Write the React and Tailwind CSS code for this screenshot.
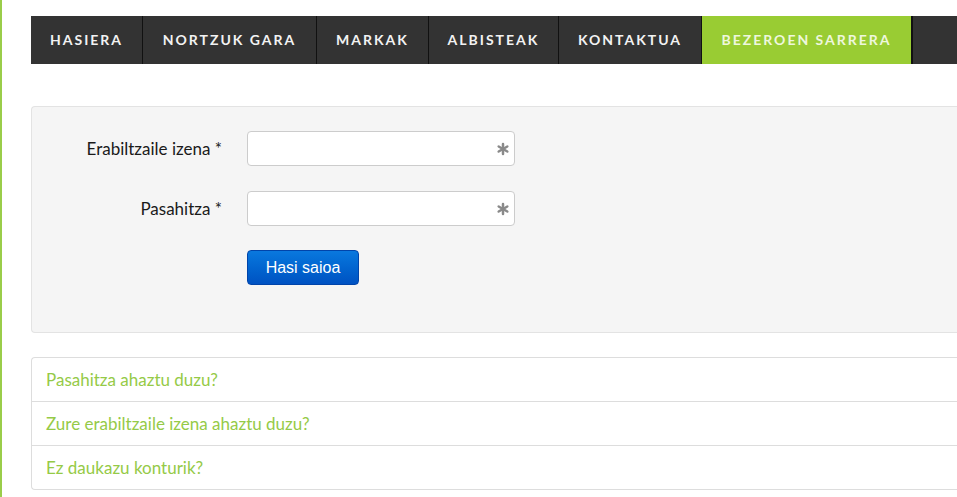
import { Asterisk } from "lucide-react";

const navItems = [
  { label: "HASIERA", w: "w-[112px]" },
  { label: "NORTZUK GARA", w: "w-[174px]" },
  { label: "MARKAK", w: "w-[112px]" },
  { label: "ALBISTEAK", w: "w-[130px]" },
  { label: "KONTAKTUA", w: "w-[143px]" },
];

const links = [
  "Pasahitza ahaztu duzu?",
  "Zure erabiltzaile izena ahaztu duzu?",
  "Ez daukazu konturik?",
];

function Field({ label, type }) {
  return (
    <div className="flex items-center">
      <label className="w-[215px] pr-[25px] text-right text-[17px] text-[#1a1a1a]">{label} *</label>
      <div className="relative">
        <input
          type={type}
          className="w-[268px] h-[35px] bg-white border border-[#cccccc] rounded-[4px] px-2 outline-none"
        />
        <span className="absolute right-[2px] top-1/2 -translate-y-1/2 text-[#8a8a8a]">
          <Asterisk size={20} strokeWidth={3} />
        </span>
      </div>
    </div>
  );
}

export default function App() {
  return (
    <div className="min-h-[497px] w-[957px] overflow-hidden bg-white border-l-2 border-[#9acd4a] font-['Lato',sans-serif]">
      <div className="pl-[29px] pt-4">
        <nav className="flex h-12 bg-[#333333]">
          {navItems.map(item => (
            <a key={item.label}
              className={`${item.w} flex items-center justify-center pb-[2px] border-r border-[#111] text-[14px] font-bold tracking-[2px] text-[#f2f2f2]`}>
              {item.label}
            </a>
          ))}
          <a className="w-[211px] flex items-center justify-center pb-[2px] bg-[#99cc33] border-r-2 border-[#111] text-[14px] font-bold tracking-[2px] text-[#eef7dd]">
            BEZEROEN SARRERA
          </a>
          <div className="flex-1" />
        </nav>

        <div className="mt-[42px] h-[227px] bg-[#f5f5f5] border border-[#e3e3e3] rounded-l-[4px] border-r-0 pt-6">
          <div className="flex flex-col gap-[25px]">
            <Field label="Erabiltzaile izena" type="text" />
            <Field label="Pasahitza" type="password" />
          </div>
          <div className="pl-[215px] mt-[24px]">
            <button className="h-[35px] w-[112px] rounded-[4px] border border-[#0044aa] bg-gradient-to-b from-[#0a78de] to-[#0052c2] text-white text-[16px] font-['Liberation_Sans',sans-serif]">
              Hasi saioa
            </button>
          </div>
        </div>

        <div className="mt-[24px] border border-[#dddddd] border-r-0 rounded-l-[4px]">
          {links.map((l, i) => (
            <div key={l} className={`${i > 0 ? "h-[44px] border-t border-[#dddddd]" : "h-[43px]"} flex items-center px-[14px] text-[17px] text-[#95ca47]`}>
              {l}
            </div>
          ))}
        </div>
      </div>
    </div>
  );
}
